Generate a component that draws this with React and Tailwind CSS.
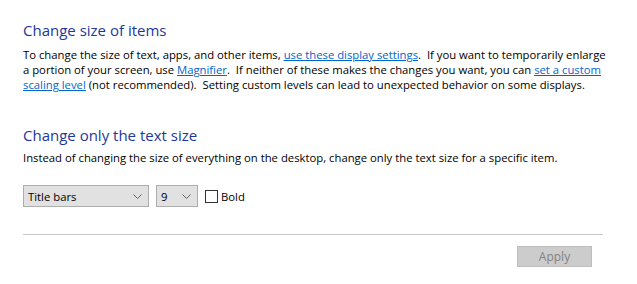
import { useState } from 'react';

function Chevron() {
  return (
    <svg width="9" height="5" viewBox="0 0 9 5" className="shrink-0">
      <path d="M0.5 0.5 L4.5 4.5 L8.5 0.5" fill="none" stroke="#606060" strokeWidth="1" />
    </svg>
  );
}

function Select({ value, width }) {
  return (
    <div
      className={`flex items-center justify-between h-[22px] border border-[#adadad] bg-[#e1e1e1] pl-[4px] pr-[6px] text-black ${width}`}
    >
      <span>{value}</span>
      <Chevron />
    </div>
  );
}

export default function App() {
  const [bold, setBold] = useState(false);

  return (
    <div
      className="w-[637px] h-[284px] bg-white text-black text-[11.3px] leading-[15px] pl-[23px] pr-[34px] pt-[20px]"
      style={{ fontFamily: '"Open Sans", "Noto Sans", sans-serif' }}
    >
      {/* Change size of items */}
      <h1 className="text-[15px] leading-[20px] text-[#1e3799]">Change size of items</h1>
      <p className="mt-[7px] whitespace-nowrap">
        To change the size of text, apps, and other items,{' '}
        <a href="#" className="text-[#0066cc] underline">use these display settings</a>.&nbsp; If you want to temporarily enlarge
        <br />
        a portion of your screen, use <a href="#" className="text-[#0066cc] underline">Magnifier</a>.&nbsp; If neither of these makes the changes you want, you can{' '}
        <a href="#" className="text-[#0066cc] underline">set a custom</a>
        <br />
        <a href="#" className="text-[#0066cc] underline">scaling level</a> (not recommended).&nbsp; Setting custom levels can lead to unexpected behavior on some displays.
      </p>

      {/* Change only the text size */}
      <h2 className="mt-[33px] text-[15px] leading-[20px] text-[#1e3799]">Change only the text size</h2>
      <p className="mt-[5px] whitespace-nowrap">
        Instead of changing the size of everything on the desktop, change only the text size for a specific item.
      </p>

      <div className="mt-[20px] flex items-center">
        <Select value="Title bars" width="w-[126px]" />
        <div className="ml-[7px]">
          <Select value="9" width="w-[42px]" />
        </div>
        <label className="ml-[7px] flex items-center gap-[3px] cursor-default" onClick={() => setBold(!bold)}>
          <span className="w-[13px] h-[13px] border border-[#333333] bg-white flex items-center justify-center">
            {bold && (
              <svg width="9" height="9" viewBox="0 0 9 9">
                <path d="M1 4.5 L3.5 7 L8 1.5" fill="none" stroke="#000" strokeWidth="1.3" />
              </svg>
            )}
          </span>
          <span>Bold</span>
        </label>
      </div>

      <div className="mt-[27px] border-t border-[#c8c8c8]" />

      <div className="mt-[11px] flex justify-end pr-[11px]">
        <button
          disabled
          className="w-[75px] h-[21px] bg-[#cccccc] border border-[#bfbfbf] text-[#838383] text-[12px] leading-[19px]"
        >
          Apply
        </button>
      </div>
    </div>
  );
}
